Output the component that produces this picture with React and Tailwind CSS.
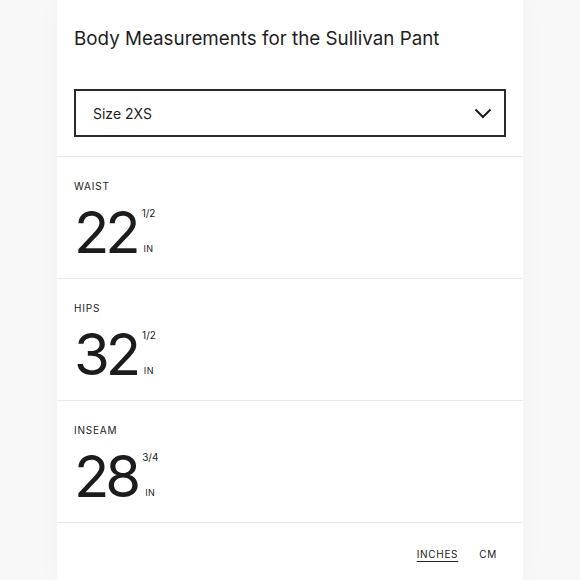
import React from 'react';

const rows = [
  { label: 'WAIST', value: '22', frac: '1/2' },
  { label: 'HIPS', value: '32', frac: '1/2' },
  { label: 'INSEAM', value: '28', frac: '3/4' },
];

const Measurement = ({ label, value, frac }) => (
  <div className="px-[17px] pt-[22px] pb-[17px] border-b border-[#e9e9e9]">
    <p className="text-[10px] leading-[14px] tracking-[0.08em] text-[#222]">{label}</p>
    <div className="mt-[10px] flex items-start">
      <span className="text-[58px] leading-none tracking-[-0.07em] text-[#1c1c1c]">{value}</span>
      <div className="ml-[5px] mt-[3px] h-[50px] flex flex-col items-center justify-between">
        <span className="text-[10px] leading-[14px] text-[#222]">{frac}</span>
        <span className="text-[9px] leading-[14px] tracking-[0.06em] text-[#222]">IN</span>
      </div>
    </div>
  </div>
);

export default function App() {
  return (
    <div className="min-h-screen bg-[#f8f8f8] font-['Inter','Liberation_Sans',sans-serif]">
      <div className="w-[466px] mx-auto bg-white min-h-screen shadow-[0_0_24px_rgba(0,0,0,0.03)]">
        <div className="px-[17px] pt-[25px] pb-[19px] border-b border-[#e9e9e9]">
          <h1 className="text-[18.8px] leading-[28px] text-[#1e1e1e]">
            Body Measurements for the Sullivan Pant
          </h1>
          <button className="mt-[36px] w-full h-[48px] border-2 border-[#2a2a2a] flex items-center justify-between pl-[17px] pr-[12px] text-left">
            <span className="text-[14px] text-[#1e1e1e]">Size 2XS</span>
            <svg width="18" height="11" viewBox="0 0 18 11" fill="none">
              <polyline points="1.5,1.5 9,9 16.5,1.5" stroke="#1a1a1a" strokeWidth="2" />
            </svg>
          </button>
        </div>

        {rows.map((r) => (
          <Measurement key={r.label} {...r} />
        ))}

        <div className="flex justify-end items-center gap-[21px] pr-[26px] pt-[24px] pb-[20px]">
          <span className="text-[10px] tracking-[0.07em] text-[#222] underline underline-offset-[3px]">INCHES</span>
          <span className="text-[10px] tracking-[0.07em] text-[#222]">CM</span>
        </div>
      </div>
    </div>
  );
}
